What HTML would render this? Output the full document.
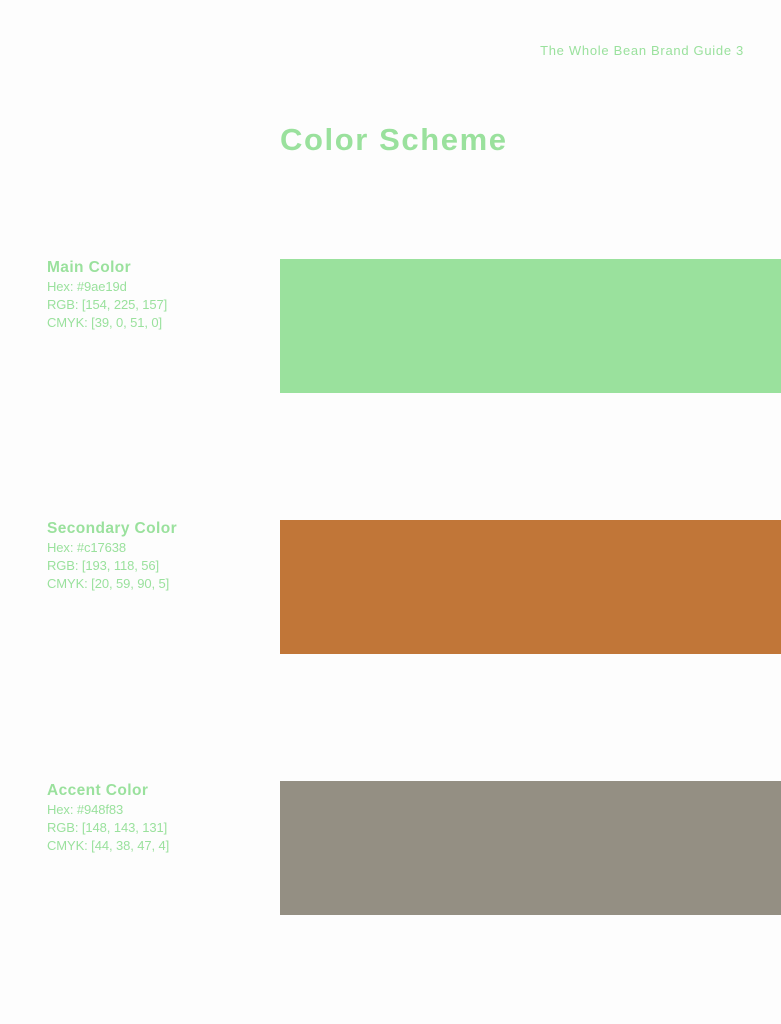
<!DOCTYPE html>
<html><head><style>
body{margin:0;width:781px;height:1024px;background:#fdfdfd;position:relative;overflow:hidden;font-family:"Liberation Sans",sans-serif;color:#9ae19d}
.abs{position:absolute;white-space:nowrap}
.hdr{right:37px;top:43px;font-size:13px;letter-spacing:0.7px}
.title{left:280px;top:122px;font-size:31px;font-weight:bold;letter-spacing:1.6px}
.lbl{left:47px;font-size:13px;line-height:18px;letter-spacing:-0.1px}
.lbl b{font-size:15.5px;display:block;line-height:20px;letter-spacing:0.4px}
.sw{position:absolute;left:280px;width:501px;height:134px}
</style></head><body>
<div class="abs hdr">The Whole Bean Brand Guide 3</div>
<div class="abs title">Color Scheme</div>

<div class="abs lbl" style="top:258px"><b>Main Color</b>Hex: #9ae19d<br>RGB: [154, 225, 157]<br>CMYK: [39, 0, 51, 0]</div>
<div class="sw" style="top:259px;background:#9ae19d"></div>

<div class="abs lbl" style="top:519px"><b>Secondary Color</b>Hex: #c17638<br>RGB: [193, 118, 56]<br>CMYK: [20, 59, 90, 5]</div>
<div class="sw" style="top:520px;background:#c17638"></div>

<div class="abs lbl" style="top:781px"><b>Accent Color</b>Hex: #948f83<br>RGB: [148, 143, 131]<br>CMYK: [44, 38, 47, 4]</div>
<div class="sw" style="top:781px;background:#948f83"></div>
</body></html>
